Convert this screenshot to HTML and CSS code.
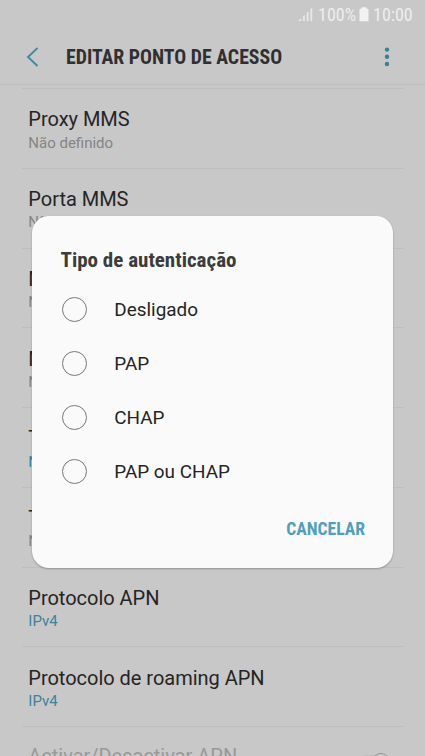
FILE: index.html
```html
<!DOCTYPE html>
<html lang="pt">
<head>
<meta charset="utf-8">
<title>Editar ponto de acesso</title>
<link rel="stylesheet" href="styles.css">
</head>
<body>
<div class="screen">
  <div class="status">
    <svg class="signal" width="15" height="15" viewBox="0 0 15 15"><path d="M0 14L3.3 11V14ZM5 9.5L6.8 8V14H5ZM8.7 6L10.5 4.4V14H8.7ZM12.4 2.3L14.2.7V14h-1.8Z" fill="#e8e8e8"/></svg>
    <span class="stat percent">100%</span>
    <svg class="battery" width="10" height="15" viewBox="0 0 10 15"><path d="M2.7.2h4.6v1.2H8q1.5 0 1.5 1.5V14.2H.5V2.9Q.5 1.4 2 1.4h.7Z" fill="#f2f2f2"/></svg>
    <span class="stat clock">10:00</span>
  </div>
  <header class="bar">
    <svg class="back" width="14" height="22" viewBox="0 0 14 22"><path d="M11.5 2L2 11L11.5 20" fill="none" stroke="#3f87a2" stroke-width="1.8"/></svg>
    <h1 class="heading">EDITAR PONTO DE ACESSO</h1>
    <svg class="more" width="6" height="20" viewBox="0 0 6 20" fill="#3c7e98"><circle cx="3" cy="2.6" r="2.2"/><circle cx="3" cy="9.8" r="2.2"/><circle cx="3" cy="17" r="2.2"/></svg>
  </header>
  <main class="list">
    <div class="row"><div class="label">Proxy MMS</div><div class="value">Não definido</div></div>
    <div class="row"><div class="label">Porta MMS</div><div class="value">Não definido</div></div>
    <div class="row"><div class="label">MCC</div><div class="value">Não definido</div></div>
    <div class="row"><div class="label">MNC</div><div class="value">Não definido</div></div>
    <div class="row"><div class="label">Tipo de autenticação</div><div class="value blue">Não definido</div></div>
    <div class="row"><div class="label">Tipo de APN</div><div class="value">Não definido</div></div>
    <div class="row"><div class="label">Protocolo APN</div><div class="value blue">IPv4</div></div>
    <div class="row"><div class="label">Protocolo de roaming APN</div><div class="value blue">IPv4</div></div>
    <div class="row off"><div class="label">Activar/Desactivar APN</div><svg class="toggle" width="38" height="22" viewBox="0 0 38 22"><path d="M20 2.7H9a8 8 0 0 0 0 16H20" fill="none" stroke="#bbb"/><circle cx="25" cy="10.5" r="10" fill="#c8c8c8" stroke="#999"/></svg></div>
  </main>
  <section class="dialog">
    <h2 class="title">Tipo de autenticação</h2>
    <div class="option"><i class="radio"></i><span>Desligado</span></div>
    <div class="option"><i class="radio"></i><span>PAP</span></div>
    <div class="option"><i class="radio"></i><span>CHAP</span></div>
    <div class="option"><i class="radio"></i><span>PAP ou CHAP</span></div>
    <div class="actions">CANCELAR</div>
  </section>
</div>
</body>
</html>
```
FILE: styles.css
```css
* { box-sizing: border-box; }
body { margin: 0; font-family: Roboto, sans-serif; }
.screen {
  position: relative;
  width: 425px;
  height: 756px;
  overflow: hidden;
  background: #c8c8c8;
  color: #252525;
}
.status {
  display: flex;
  height: 29px;
  padding: 7px 13px 0 0;
  justify-content: flex-end;
  color: #eee;
}
.stat { margin-top: -1px; font: 400 18px/17px "Roboto Condensed", Roboto, sans-serif; white-space: nowrap; }
.percent { width: 37px; margin-left: 5px; }
.battery { margin-left: 4px; }
.clock { width: 39px; margin-left: 4px; }
.bar {
  display: flex;
  align-items: center;
  height: 56px;
  padding: 0 35px 0 26px;
  border-bottom: 1px solid #bebebe;
}
.heading { flex: 1; margin: 3px 0 0 26px; color: #303030; font: 700 19.8px/24px "Roboto Condensed", Roboto, sans-serif; white-space: nowrap; }
.list { padding: 3px 21px 0 22px; }
.row {
  height: 79.75px;
  padding: 18.4px 7px 0 6.3px;
  border-top: 1px solid #bebebe;
}
.label { font-size: 20px; line-height: 24px; letter-spacing: -.02px; white-space: nowrap; }
.value { margin-top: 2.2px; font-size: 15px; line-height: 18px; color: #858585; }
.blue { color: #3f829b; }
.off { display: flex; justify-content: space-between; padding-top: 17px; color: #999; }
.toggle { margin: 8.5px 3px 0 0; }
.dialog {
  position: absolute;
  left: 32px;
  top: 216px;
  width: 361px;
  height: 352px;
  padding: 32px 28px 0 28.5px;
  border-radius: 17px;
  background: #fafafa;
  box-shadow: 0 1px 2px rgba(0, 0, 0, .28);
}
.title { height: 34.8px; margin: 0; font: 700 21px/25px "Roboto Condensed", Roboto, sans-serif; color: #3c3c3c; }
.option { display: flex; align-items: center; height: 53.8px; font-size: 18.9px; line-height: 24px; }
.option span { padding-top: 1.5px; }
.radio { width: 25px; height: 25px; margin: 0 27.6px 0 1.2px; border: 1.5px solid #777; border-radius: 50%; }
.actions { display: flex; justify-content: flex-end; margin-top: 19.2px; font: 700 17.6px/24px "Roboto Condensed", Roboto, sans-serif; color: #4ea0bd; }
```
